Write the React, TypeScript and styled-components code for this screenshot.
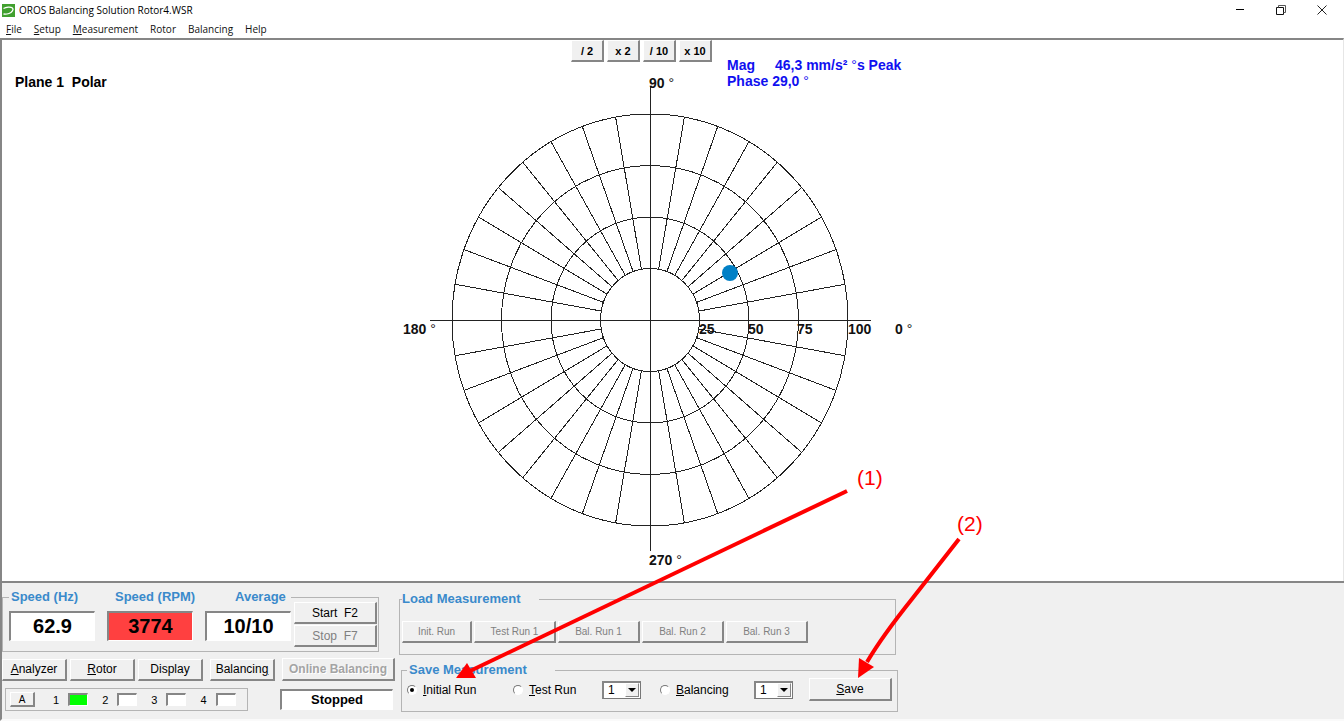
import React from "react";
import styled, { createGlobalStyle, css } from "styled-components";

const face = "#f0f0f0";
const shadow = "#868686";
const line = "#b4b4b4";
const legendBlue = "#3a8acb";
const sans = '"Liberation Sans", Arial, sans-serif';

const GlobalStyle = createGlobalStyle`
  *, *::before, *::after { box-sizing: border-box; }
  body { margin: 0; background: #fff; color: #000; font-family: ${sans}; font-size: 12px; }
  button, select, input { font: inherit; color: inherit; }
`;

const Window = styled.div`
  position: relative;
  display: flex;
  flex-direction: column;
  min-height: 100vh;
`;

const TitleBar = styled.header`
  display: flex;
  align-items: center;
  height: 20px;
  padding: 0 2px;
  font-family: "Open Sans", sans-serif;
  font-size: 10px;
`;

const Title = styled.h1`
  flex: 1;
  margin: 0 0 0 4px;
  font-size: 10px;
  font-weight: 400;
`;

const CaptionButton = styled.button`
  display: grid;
  place-items: center;
  width: 41px;
  height: 20px;
  padding: 0;
  border: 0;
  background: none;
`;

const MenuBar = styled.nav`
  display: flex;
  gap: 12px;
  height: 18px;
  padding: 0 6px;
  font-family: "Open Sans", sans-serif;
  font-size: 10px;
  line-height: 18px;
`;

const MenuItem = styled.a`
  color: #111;
  text-decoration: none;
`;

const PlotPane = styled.main`
  flex: 1;
  display: grid;
  grid-template-columns: 1fr 560px 1fr;
  padding-right: 3px;
  border-top: 2px solid ${shadow};
  border-left: 2px solid ${shadow};
  border-right: 1px solid #e6e6e6;
`;

const PlotTitle = styled.h2`
  margin: 34px 0 0 13px;
  font-size: 14px;
  line-height: 16px;
  white-space: pre;
`;

const Stage = styled.div`
  display: grid;
  & > * { grid-area: 1 / 1; }
`;

const StageHeader = styled.div`
  display: flex;
  align-items: flex-start;
  align-self: start;
  gap: 15px;
  padding-left: 180px;
`;

const ScaleButtons = styled.div`
  display: flex;
  gap: 3px;
`;

const Readout = styled.div`
  margin-top: 17px;
  color: #1010f0;
  font-size: 14px;
  font-weight: 700;
  line-height: 16px;
  white-space: nowrap;
`;

const ReadoutName = styled.span`
  display: inline-block;
  min-width: 48px;
`;

const Degree = styled.span`
  font-weight: 400;
`;

const Chart = styled.svg`
  display: block;
  text { font-size: 14px; font-weight: 700; fill: #111; }
  tspan { font-weight: 400; }
`;

const Button = styled.button<{ $w: number; $h?: number; $size?: number; $bold?: boolean; $embossed?: boolean }>`
  display: flex;
  align-items: center;
  justify-content: center;
  width: ${(p) => p.$w}px;
  height: ${(p) => p.$h ?? 22}px;
  padding: 0;
  border: solid ${shadow};
  border-width: 1px 2px 2px 1px;
  border-top-color: #fff;
  border-left-color: #fff;
  background: ${face};
  font-size: ${(p) => p.$size ?? 12}px;
  font-weight: ${(p) => (p.$bold ? 700 : 400)};
  white-space: pre;
  &:disabled { color: #808080; }
  ${(p) => p.$embossed && css`
    &:disabled { color: #a4a4a4; text-shadow: 1px 1px 0 #fff; }
  `}
`;

const Panel = styled.footer`
  display: flex;
  align-items: flex-start;
  gap: 4px;
  padding: 9px 0 7px;
  border-top: 2px solid ${shadow};
  border-left: 2px solid ${shadow};
  border-bottom: 2px solid #fafafa;
  background: ${face};
`;

const Column = styled.section`
  display: flex;
  flex-direction: column;
`;

const Fieldset = styled.fieldset<{ $pad: string; $width?: number }>`
  width: ${(p) => (p.$width ? `${p.$width}px` : "auto")};
  min-width: 0;
  margin: 0;
  padding: ${(p) => p.$pad};
  border: 1px solid ${line};
`;

const Legend = styled.legend<{ $pad: string }>`
  padding: ${(p) => p.$pad};
  color: ${legendBlue};
  font-size: 13px;
  font-weight: 700;
  line-height: 14px;
`;

const MeterLegend = styled.legend`
  display: flex;
  gap: 12px;
  padding: 0;
  color: ${legendBlue};
  font-size: 13px;
  font-weight: 700;
  line-height: 10px;
`;

const MeterLabel = styled.label<{ $indent: number }>`
  width: 86px;
  padding-left: ${(p) => p.$indent}px;
  white-space: nowrap;
`;

const MeterRow = styled.div`
  display: flex;
  gap: 3px;
`;

const Meters = styled.div`
  display: flex;
  gap: 12px;
  padding-top: 9px;
`;

const sunken = css`
  border: solid #fff;
  border-width: 2px 1px 1px 2px;
  border-top-color: ${shadow};
  border-left-color: ${shadow};
`;

const Meter = styled.output<{ $alert?: boolean }>`
  ${sunken}
  width: 86px;
  height: 30px;
  background: ${(p) => (p.$alert ? "#ff4040" : "#fff")};
  font-size: 20px;
  font-weight: 700;
  line-height: 26px;
  text-align: center;
`;

const ButtonStack = styled.div`
  display: flex;
  flex-direction: column;
  gap: 1px;
`;

const Row = styled.div<{ $gap: number; $top?: number }>`
  display: flex;
  align-items: center;
  gap: ${(p) => p.$gap}px;
  margin-top: ${(p) => p.$top ?? 0}px;
`;

const Channels = styled.div`
  display: flex;
  align-items: center;
  gap: 18px;
  width: 243px;
  height: 23px;
  margin-left: 3px;
  padding: 0 4px;
  border: 1px solid ${line};
  font-size: 11px;
`;

const Channel = styled.span`
  display: flex;
  align-items: center;
  gap: 9px;
`;

const Led = styled.span<{ $on: boolean }>`
  ${sunken}
  width: 20px;
  height: 13px;
  background: ${(p) => (p.$on ? "#00ff00" : "#fff")};
`;

const Status = styled.output`
  ${sunken}
  width: 113px;
  height: 21px;
  background: #fff;
  font-size: 13px;
  font-weight: 700;
  line-height: 17px;
  text-align: center;
`;

const SaveGroup = styled.div`
  margin: 8px 0 0 2px;
`;

const SaveRow = styled.div`
  display: grid;
  grid-template-columns: 106px 89px 58px 94px 55px auto;
  align-items: center;
`;

const RadioLabel = styled.label`
  display: flex;
  align-items: center;
  gap: 6px;
  white-space: nowrap;
`;

const Radio = styled.input`
  display: grid;
  place-items: center;
  appearance: none;
  width: 10px;
  height: 10px;
  margin: 0;
  border: 1px solid;
  border-color: #777 #fff #fff #777;
  border-radius: 50%;
  background: #fff;
  &:checked::before {
    content: "";
    width: 4px;
    height: 4px;
    border-radius: 50%;
    background: #000;
  }
`;

const Combo = styled.span`
  display: grid;
  width: 39px;
  & > * { grid-area: 1 / 1; }
`;

const Select = styled.select`
  appearance: none;
  width: 39px;
  height: 18px;
  padding: 0 0 0 4px;
  border: 2px solid ${shadow};
  border-right: 1px solid #777;
  border-bottom: 1px solid #777;
  border-radius: 0;
  background: #fff;
  line-height: 14px;
`;

const ComboArrow = styled.span`
  display: grid;
  place-items: center;
  justify-self: end;
  align-self: center;
  width: 14px;
  height: 14px;
  margin-right: 2px;
  border: 1px solid;
  border-color: #fff ${shadow} ${shadow} #fff;
  background: ${face};
  pointer-events: none;
  &::before {
    content: "";
    border: solid transparent;
    border-width: 4px 4px 0;
    border-top-color: #000;
  }
`;

const Callouts = styled.svg`
  position: absolute;
  left: 450px;
  bottom: 31px;
  pointer-events: none;
  text { font-size: 21px; fill: #f00; }
  path { fill: none; stroke: #f00; stroke-width: 4; }
  polygon { fill: #f00; }
`;

const RX = 198;
const RY = 206;
const rings = [1, 2, 3, 4];
const spokes = Array.from({ length: 36 }, (_, i) => i * 10).filter((a) => a % 90 !== 0);

function PolarChart() {
  return (
    <Chart width="560" height="537" viewBox="-259 -280 560 537" role="img" aria-label="Polar plot">
      <g fill="none" stroke="#222" shapeRendering="crispEdges">
        {rings.map((r) => (
          <ellipse key={r} cx="0" cy="0" rx={(RX * r) / 4} ry={(RY * r) / 4} />
        ))}
        {spokes.map((a) => {
          const c = Math.cos((a * Math.PI) / 180);
          const s = Math.sin((a * Math.PI) / 180);
          return <line key={a} x1={(RX * c) / 4} y1={(RY * s) / 4} x2={RX * c} y2={RY * s} />;
        })}
        <path d="M-220 .5H221M.5 -234V231" />
      </g>
      <circle cx="80" cy="-47" r="8" fill="#0080c6" />
      <text x="-1" y="-232">90 <tspan>°</tspan></text>
      <text x="-247" y="14">180 <tspan>°</tspan></text>
      <text x="-1" y="245">270 <tspan>°</tspan></text>
      <text x="245" y="14">0 <tspan>°</tspan></text>
      <text x="49" y="14">25</text>
      <text x="98" y="14">50</text>
      <text x="147" y="14">75</text>
      <text x="198" y="14">100</text>
    </Chart>
  );
}

function RunSelect({ label }: { label: string }) {
  return (
    <Combo>
      <Select aria-label={label} defaultValue="1">
        <option>1</option>
        <option>2</option>
        <option>3</option>
      </Select>
      <ComboArrow />
    </Combo>
  );
}

export default function App() {
  return (
    <Window>
      <GlobalStyle />
      <TitleBar>
        <svg width="13" height="13" viewBox="0 0 13 13" aria-hidden="true">
          <rect width="13" height="13" fill="#41a02f" />
          <path d="M1.500 4.500C4 3 8.500 2.500 10.500 4C12 5.500 10 8.500 7 9.500C5 10.200 3 10.300 1.500 10" fill="none" stroke="#fff" strokeWidth="1.300" />
        </svg>
        <Title>OROS Balancing Solution Rotor4.WSR</Title>
        <CaptionButton aria-label="Minimize">
          <svg width="10" height="10"><path d="M1 4.500H9" stroke="#000" /></svg>
        </CaptionButton>
        <CaptionButton aria-label="Restore">
          <svg width="10" height="10" fill="none" stroke="#111">
            <path d="M.5 2.500H7.500V9.500H.5Z" />
            <path d="M2.500 2.500V.5H9.500V7.500H7.500" stroke="#555" />
          </svg>
        </CaptionButton>
        <CaptionButton aria-label="Close">
          <svg width="10" height="10"><path d="M.5 .5L9.500 9.500M9.500 .5L.5 9.500" stroke="#222" /></svg>
        </CaptionButton>
      </TitleBar>
      <MenuBar>
        <MenuItem href="#file"><u>F</u>ile</MenuItem>
        <MenuItem href="#setup"><u>S</u>etup</MenuItem>
        <MenuItem href="#measurement"><u>M</u>easurement</MenuItem>
        <MenuItem href="#rotor">Rotor</MenuItem>
        <MenuItem href="#balancing">Balancing</MenuItem>
        <MenuItem href="#help">Help</MenuItem>
      </MenuBar>

      <PlotPane>
        <PlotTitle>{"Plane 1  Polar"}</PlotTitle>
        <Stage>
          <PolarChart />
          <StageHeader>
            <ScaleButtons>
              {["/ 2", "x 2", "/ 10", "x 10"].map((t) => (
                <Button key={t} $w={33} $size={11} $bold>{t}</Button>
              ))}
            </ScaleButtons>
            <Readout>
              <div><ReadoutName>Mag</ReadoutName>46,3 mm/s² <Degree>°</Degree>s Peak</div>
              <div>Phase 29,0 <Degree>°</Degree></div>
            </Readout>
          </StageHeader>
        </Stage>
      </PlotPane>

      <Panel>
        <Column>
          <Fieldset $pad="0 1px 4px 6px" $width={377}>
            <MeterLegend>
              <MeterLabel htmlFor="hz" $indent={2}>Speed (Hz)</MeterLabel>
              <MeterLabel htmlFor="rpm" $indent={8}>Speed (RPM)</MeterLabel>
              <MeterLabel htmlFor="avg" $indent={30}>Average</MeterLabel>
            </MeterLegend>
            <MeterRow>
              <Meters>
                <Meter id="hz">62.9</Meter>
                <Meter id="rpm" $alert>3774</Meter>
                <Meter id="avg">10/10</Meter>
              </Meters>
              <ButtonStack>
                <Button $w={83}>Start  F2</Button>
                <Button $w={83} disabled>Stop  F7</Button>
              </ButtonStack>
            </MeterRow>
          </Fieldset>
          <Row $gap={7} $top={6}>
            <Row $gap={3}>
              <Button $w={65}><u>A</u>nalyzer</Button>
              <Button $w={65}><u>R</u>otor</Button>
              <Button $w={65}>Display</Button>
            </Row>
            <Button $w={65}>Balancin<u>g</u></Button>
            <Button $w={113} $h={23} $bold $embossed disabled>Online Balancing</Button>
          </Row>
          <Row $gap={32} $top={7}>
            <Channels>
              <Button $w={25} $h={15} $size={10}>A</Button>
              <Row $gap={14}>
                {[1, 2, 3, 4].map((n) => (
                  <Channel key={n}>{n}<Led $on={n === 1} /></Channel>
                ))}
              </Row>
            </Channels>
            <Status>Stopped</Status>
          </Row>
        </Column>

        <Column>
          <Fieldset $pad="15px 2px 11px" $width={497}>
            <Legend $pad="0 19px 0 0">Load Measurement</Legend>
            <Row $gap={2}>
              <Button $w={70} $size={10} disabled>Init. Run</Button>
              {["Test Run 1", "Bal. Run 1", "Bal. Run 2", "Bal. Run 3"].map((t) => (
                <Button key={t} $w={82} $size={10} disabled>{t}</Button>
              ))}
            </Row>
          </Fieldset>
          <SaveGroup>
            <Fieldset $pad="1px 5px 10px" $width={497}>
              <Legend $pad="0 28px 0 2px">Save Measurement</Legend>
              <SaveRow>
                <RadioLabel><Radio type="radio" name="run" defaultChecked /><span><u>I</u>nitial Run</span></RadioLabel>
                <RadioLabel><Radio type="radio" name="run" /><span><u>T</u>est Run</span></RadioLabel>
                <RunSelect label="Test run number" />
                <RadioLabel><Radio type="radio" name="run" /><span><u>B</u>alancing</span></RadioLabel>
                <RunSelect label="Balancing run number" />
                <Button $w={83} $h={23}><u>S</u>ave</Button>
              </SaveRow>
            </Fieldset>
          </SaveGroup>
        </Column>
      </Panel>

      <Callouts width="550" height="230" viewBox="450 460 550 230">
        <path d="M847 491L470 671" />
        <polygon points="456,678 467,663 476,678" />
        <path d="M959 539L912 599C896 619 880 640 867 662" />
        <polygon points="858,678 859,658 874,667" />
        <text x="857" y="485">(1)</text>
        <text x="957" y="531">(2)</text>
      </Callouts>
    </Window>
  );
}
